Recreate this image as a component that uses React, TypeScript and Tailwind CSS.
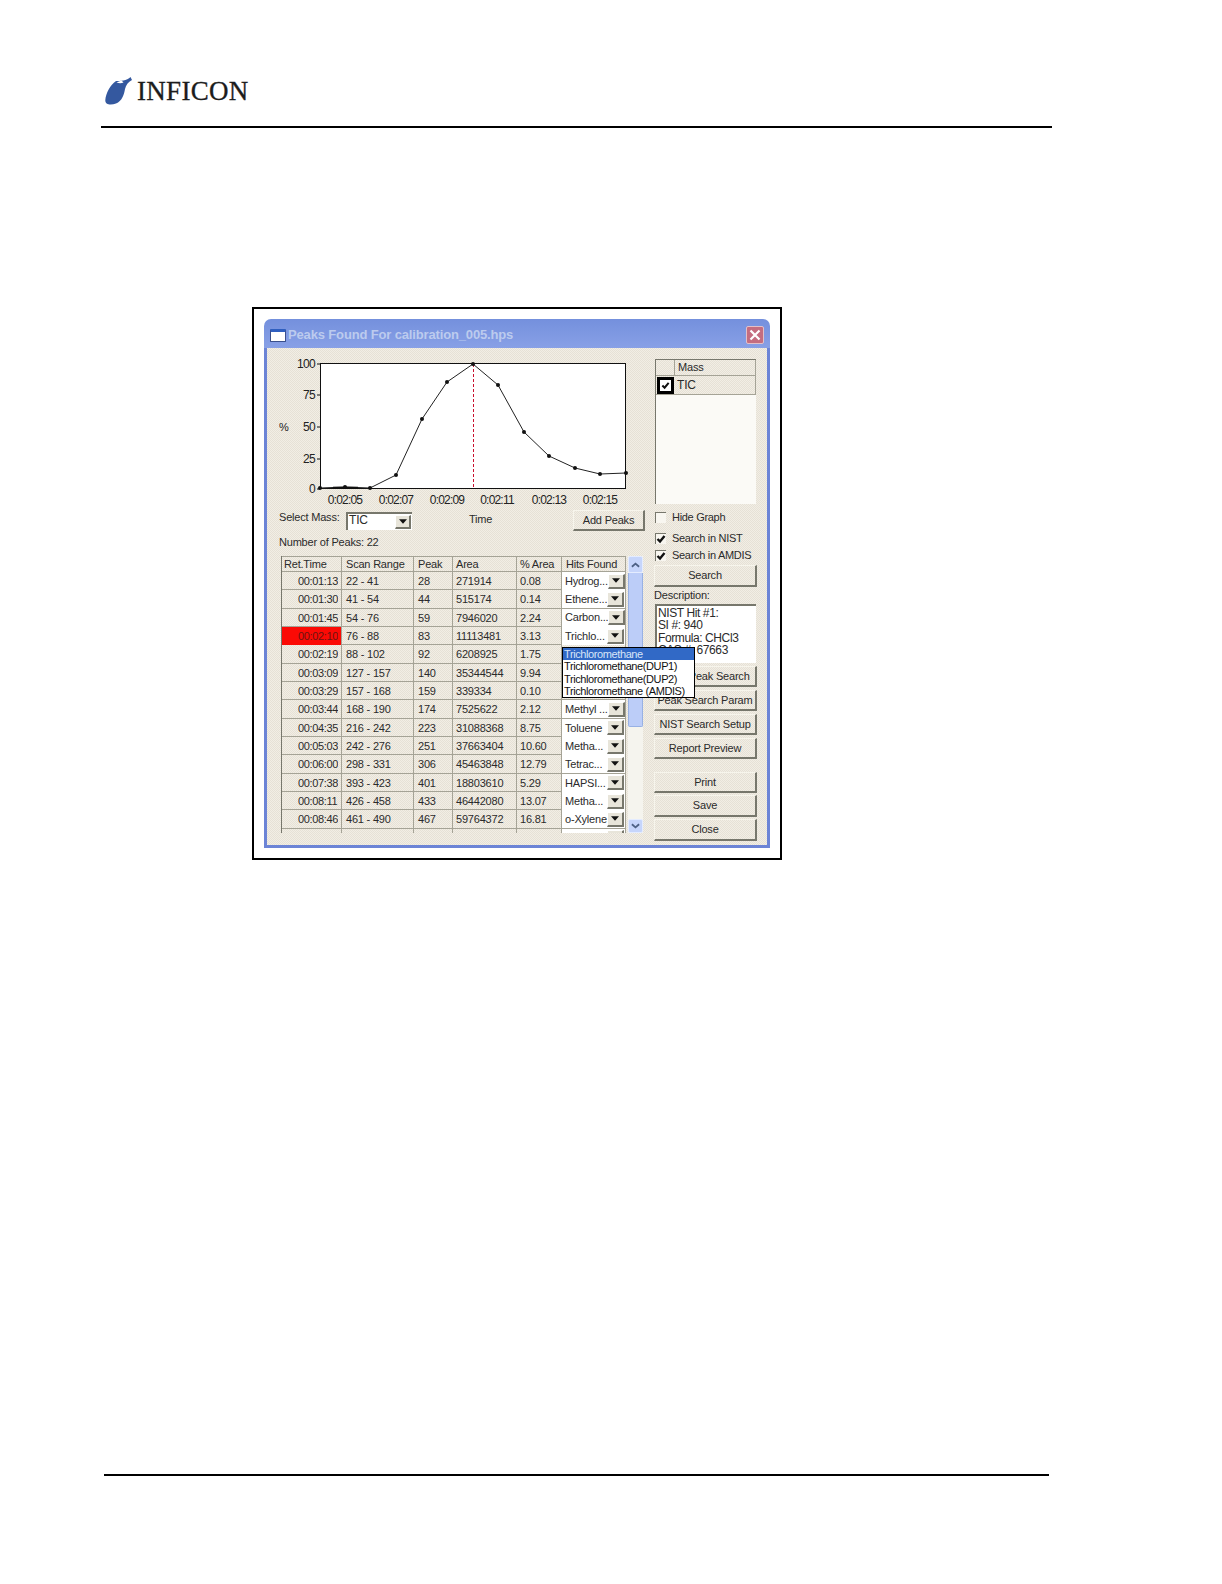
import React from 'react'

const texture =
  'bg-[repeating-conic-gradient(#e6e1d6_0_25%,#f2eee5_0_50%)] bg-[length:2px_2px]'

const rows = [
  ['00:01:13', '22 - 41', '28', '271914', '0.08', 'Hydrog...'],
  ['00:01:30', '41 - 54', '44', '515174', '0.14', 'Ethene...'],
  ['00:01:45', '54 - 76', '59', '7946020', '2.24', 'Carbon...'],
  ['00:02:10', '76 - 88', '83', '11113481', '3.13', 'Trichlo...'],
  ['00:02:19', '88 - 102', '92', '6208925', '1.75', ''],
  ['00:03:09', '127 - 157', '140', '35344544', '9.94', ''],
  ['00:03:29', '157 - 168', '159', '339334', '0.10', ''],
  ['00:03:44', '168 - 190', '174', '7525622', '2.12', 'Methyl ...'],
  ['00:04:35', '216 - 242', '223', '31088368', '8.75', 'Toluene'],
  ['00:05:03', '242 - 276', '251', '37663404', '10.60', 'Metha...'],
  ['00:06:00', '298 - 331', '306', '45463848', '12.79', 'Tetrac...'],
  ['00:07:38', '393 - 423', '401', '18803610', '5.29', 'HAPSI...'],
  ['00:08:11', '426 - 458', '433', '46442080', '13.07', 'Metha...'],
  ['00:08:46', '461 - 490', '467', '59764372', '16.81', 'o-Xylene'],
  ['00:09:14', '491 - 505', '494', '8377144', '2.44', 'o-Xyle...'],
]

const points = [
  [320, 488], [345, 487], [370, 488], [396, 475], [422, 419], [447, 382], [473, 364],
  [498, 385], [524, 432], [549, 456], [575, 468], [600, 474], [626, 473],
]

const yTicks = [
  ['100', 364], ['75', 395], ['50', 427], ['25', 459], ['0', 489],
] as const

const xTicks = [
  ['0:02:05', 345], ['0:02:07', 396], ['0:02:09', 447], ['0:02:11', 497], ['0:02:13', 549], ['0:02:15', 600],
] as const

function Logo() {
  return (
    <div className="flex items-center h-[30px]">
      <svg viewBox="0 0 28 30" className="w-[28px] h-[30px]">
        <path
          d="M0.3 24C1 17 5 9 11 5C15 5 22 5 25.5 1L27 4C23 6 21 9 20 13C19 19 17 25 11 27.5C6 29.5 0 29 0.3 24Z"
          fill="#34589f"
        />
        <path d="M11.5 6.5C14 7.5 16.5 7.5 18.5 6.5L16.5 4.5Z" fill="#fff" />
      </svg>
      <span className="ml-[4px] mt-[1px] font-['Liberation_Serif',serif] text-[27px] tracking-[0.3px] leading-none text-[#1c1c1c] [-webkit-text-stroke:0.3px_#1c1c1c]">
        INFICON
      </span>
    </div>
  )
}

function Chart() {
  return (
    <svg viewBox="279 355 366 153" className="block w-[366px] h-[153px]">
      <rect x="320.5" y="363.5" width="305" height="125" fill="#fff" stroke="#111" />
      {yTicks.map(([label, y]) => (
        <g key={label}>
          <line x1="317" x2="320" y1={y} y2={y} stroke="#111" />
          <text x="315" y={y + 4} textAnchor="end" className="text-[12px] tracking-[-0.7px]" fill="#222">
            {label}
          </text>
        </g>
      ))}
      <text x="279" y="431" className="text-[11px]" fill="#222">%</text>
      {xTicks.map(([label, x]) => (
        <text key={label} x={x} y="504" textAnchor="middle" className="text-[12px] tracking-[-0.8px]" fill="#222">
          {label}
        </text>
      ))}
      <line x1="473.5" x2="473.5" y1="364" y2="488" stroke="#c8102e" strokeDasharray="3 2" />
      <polyline points={points.map((p) => p.join(',')).join(' ')} fill="none" stroke="#222" />
      <line x1="333" x2="358" y1="487.5" y2="487.5" stroke="#111" strokeWidth="1.5" />
      {points.map(([x, y]) => (
        <circle key={x} cx={x} cy={y} r="2" fill="#111" />
      ))}
    </svg>
  )
}

function DropArrow() {
  return (
    <svg viewBox="0 0 9 5" className="w-[8px] h-[5px]">
      <path d="M0 0h9L4.5 5z" fill="#111" />
    </svg>
  )
}

function ArrowButton({ className }: { className: string }) {
  return (
    <span
      className={`flex items-center justify-center bg-[#e8e5da] border-t border-l border-t-white border-l-white border-r-2 border-b-2 border-r-[#77776c] border-b-[#77776c] ${className}`}
    >
      <DropArrow />
    </span>
  )
}

function Check({ checked, label }: { checked: boolean; label: string }) {
  return (
    <div className="flex items-center h-[11px] ml-[1px]">
      <span className="flex items-center justify-center w-[11px] h-[11px] bg-[#f8f6f0] border-t border-l border-[#77776c]">
        {checked && (
          <svg viewBox="0 0 10 10" className="w-[10px] h-[10px]">
            <path d="M1.5 5L4 7.5L8.5 2" stroke="#111" strokeWidth="2.4" fill="none" />
          </svg>
        )}
      </span>
      <span className="ml-[6px] whitespace-nowrap tracking-[-0.3px]">{label}</span>
    </div>
  )
}

function Btn({ label, className }: { label: string; className: string }) {
  return (
    <button
      type="button"
      className={`block border-t border-l border-t-[#f7f5ec] border-l-[#f7f5ec] border-r-2 border-b-2 border-r-[#77776c] border-b-[#77776c] whitespace-nowrap ${className}`}
    >
      {label}
    </button>
  )
}

function PeakTable() {
  return (
    <div className="w-[345px] h-[277px] overflow-hidden border-l border-[#77776c]">
      <div className="grid grid-cols-[60px_72px_39px_64px_45px_64px] h-[16px] items-center border-b border-t border-[#a5a396] leading-[14px]">
        <div className="pl-[2px] h-full border-r border-[#a5a396]">Ret.Time</div>
        <div className="pl-[4px] h-full border-r border-[#a5a396]">Scan Range</div>
        <div className="pl-[4px] h-full border-r border-[#a5a396]">Peak</div>
        <div className="pl-[3px] h-full border-r border-[#a5a396]">Area</div>
        <div className="pl-[3px] h-full border-r border-[#a5a396]">% Area</div>
        <div className="pl-[4px] h-full border-r border-[#a5a396]">Hits Found</div>
      </div>
      {rows.map((r, i) => (
        <div
          key={r[0]}
          className="grid grid-cols-[60px_72px_39px_64px_45px_64px] h-[18.35px] items-center border-b border-[#a5a396]"
        >
          <div className={`h-full leading-[18px] pr-[3px] border-r border-[#a5a396] tracking-[-0.35px] ${i === 3 ? 'bg-[#fb0a05] text-[#6d1410]' : ''}`}>
            <div className="ml-[16px] overflow-hidden whitespace-nowrap">{r[0]}</div>
          </div>
          <div className="h-full pl-[4px] leading-[18px] border-r border-[#a5a396]">{r[1]}</div>
          <div className="h-full pl-[4px] leading-[18px] border-r border-[#a5a396]">{r[2]}</div>
          <div className="h-full pl-[3px] leading-[18px] border-r border-[#a5a396]">{r[3]}</div>
          <div className="h-full pl-[3px] leading-[18px] border-r border-[#a5a396]">{r[4]}</div>
          <div className="h-full flex items-center border-r border-[#a5a396]">
            {r[5] && (
              <div className="flex items-center justify-between w-full h-full pl-[3px] pr-[1px] bg-white whitespace-nowrap">
                {r[5]}
                <ArrowButton className="w-[17px] h-[15px] shrink-0" />
              </div>
            )}
          </div>
        </div>
      ))}
    </div>
  )
}

function Chevron({ up }: { up?: boolean }) {
  return (
    <svg viewBox="0 0 10 6" className="w-[9px] h-[6px]">
      <path d={up ? 'M1 5L5 1.5L9 5' : 'M1 1L5 4.5L9 1'} stroke="#4d6185" strokeWidth="2" fill="none" />
    </svg>
  )
}

function ScrollBar() {
  return (
    <div className="flex flex-col w-[15px] h-[277px] bg-[#f5f4ee]">
      <div className="flex items-center justify-center h-[17px] bg-[#c6d5fb] border border-[#e4ecff] rounded-[2px]">
        <Chevron up />
      </div>
      <div className="h-[154px] bg-[#bccdf8] border-b border-x border-[#98b1e4] rounded-b-[2px]" />
      <div className="flex-1" />
      <div className="flex items-center justify-center h-[14px] bg-[#c6d5fb] border border-[#e4ecff] rounded-[2px]">
        <Chevron />
      </div>
    </div>
  )
}

function HitsMenu() {
  const items = ['Trichloromethane', 'Trichloromethane(DUP1)', 'Trichloromethane(DUP2)', 'Trichloromethane (AMDIS)']
  return (
    <div className="absolute left-[295px] top-[299px] w-[133px] h-[51px] bg-white border border-black tracking-[-0.4px] leading-[12.25px]">
      {items.map((item, i) => (
        <div key={item} className={`pl-[1px] h-[12.25px] whitespace-nowrap ${i === 0 ? 'bg-[#3169c6] text-[#d8e4f8]' : 'text-[#111]'}`}>
          {item}
        </div>
      ))}
    </div>
  )
}

function RightPanel() {
  return (
    <div className="w-[103px] ml-[9px] mt-[4px] flex flex-col">
      <div className="ml-[1px] w-[101px] h-[145px] bg-[#fbfaf6] border-l border-t border-[#77776c]">
        <div className={`flex h-[16px] leading-[15px] border-b border-[#a5a396] ${texture}`}>
          <div className="w-[19px] border-r border-[#a5a396]" />
          <div className="flex-1 pl-[3px] border-r border-[#a5a396]">Mass</div>
        </div>
        <div className={`flex items-center h-[19px] border-b border-r border-[#a5a396] text-[12px] ${texture}`}>
          <span className="flex items-center justify-center w-[17px] h-[17px] ml-[1px] bg-white border-[3px] border-black">
            <svg viewBox="0 0 10 10" className="w-[9px] h-[9px]">
              <path d="M1.5 5L4 7.5L8.5 2" stroke="#111" strokeWidth="2.2" fill="none" />
            </svg>
          </span>
          <span className="ml-[3px]">TIC</span>
        </div>
      </div>
      <div className="mt-[8px]"><Check checked={false} label="Hide Graph" /></div>
      <div className="mt-[10px]"><Check checked label="Search in NIST" /></div>
      <div className="mt-[6px]"><Check checked label="Search in AMDIS" /></div>
      <Btn label="Search" className="w-[103px] h-[22px] mt-[4px]" />
      <div className="mt-[2px] h-[12px] leading-[12px]">Description:</div>
      <div className="mt-[3px] ml-[1px] w-[101px] h-[59px] pl-[1px] pt-[1px] bg-white border-t-2 border-l-2 border-[#77776c] text-[12px] leading-[12.4px] tracking-[-0.4px] whitespace-nowrap">
        <div>NIST Hit #1:</div>
        <div>SI #: 940</div>
        <div>Formula: CHCl3</div>
        <div>CAS #: 67663</div>
      </div>
      <Btn label="Redo Peak Search" className="w-[103px] h-[21px] mt-[3px]" />
      <Btn label="Peak Search Param" className="w-[103px] h-[21px] mt-[3px]" />
      <Btn label="NIST Search Setup" className="w-[103px] h-[21px] mt-[3px]" />
      <Btn label="Report Preview" className="w-[103px] h-[21px] mt-[3px]" />
      <Btn label="Print" className="w-[103px] h-[21px] mt-[13px]" />
      <Btn label="Save" className="w-[103px] h-[22px] mt-[2px]" />
      <Btn label="Close" className="w-[103px] h-[22px] mt-[2px]" />
    </div>
  )
}

function PeaksWindow() {
  return (
    <div className="flex flex-col w-[506px] h-[529px] rounded-t-[7px] overflow-hidden">
      <div className="flex items-center h-[29px] pt-[3px] pl-[6px] pr-[6px] bg-gradient-to-b from-[#7490dd] to-[#88a0e6]">
        <span className="w-[16px] h-[13px] bg-white border border-[#3a4f8c] border-t-[3px] border-t-[#2f5fc0] rounded-[1px]" />
        <span className="ml-[2px] flex-1 font-bold text-[13px] tracking-[-0.15px] text-[#bccbee] whitespace-nowrap">
          Peaks Found For calibration_005.hps
        </span>
        <span className="flex items-center justify-center w-[18px] h-[18px] bg-[#c46d80] border border-[#e2c0c8] rounded-[2px]">
          <svg viewBox="0 0 12 12" className="w-[12px] h-[12px]">
            <path d="M1.5 1.5L10.5 10.5M10.5 1.5L1.5 10.5" stroke="#fff" strokeWidth="2.2" />
          </svg>
        </span>
      </div>
      <div className={`relative flex flex-1 pl-[12px] pt-[7px] border-[3px] border-t-0 border-[#6c84d6] text-[11px] tracking-[-0.2px] text-[#2b2b2b] ${texture}`}>
        <div className="w-[366px] flex flex-col">
          <Chart />
          <div className="flex items-center h-[21px] mt-[2px]">
            <span className="w-[67px] -mt-[6px] whitespace-nowrap">Select Mass:</span>
            <div className="flex items-center justify-between w-[66px] h-[18px] pl-[1px] pr-[1px] bg-white border-t-2 border-l-2 border-[#77776c] text-[12px]">
              <span className="-mt-[3px]">TIC</span>
              <ArrowButton className="w-[16px] h-[14px]" />
            </div>
            <span className="ml-[57px] -mt-[2px]">Time</span>
            <Btn label="Add Peaks" className="w-[72px] h-[21px] ml-auto" />
          </div>
          <div className="mt-[5px] h-[12px] leading-[12px]">Number of Peaks: 22</div>
          <div className="flex gap-[2px] ml-[2px] mt-[8px]">
            <PeakTable />
            <ScrollBar />
          </div>
        </div>
        <RightPanel />
        <HitsMenu />
      </div>
    </div>
  )
}

export default function App() {
  return (
    <div className="w-[1222px] h-[1584px] bg-white font-['Liberation_Sans',Arial,sans-serif] overflow-hidden">
      <div className="pt-[76px] pl-[105px]">
        <Logo />
      </div>
      <div className="mt-[20px] ml-[101px] w-[951px] h-[2px] bg-black" />
      <div className="mt-[179px] ml-[252px] w-[530px] h-[553px] pl-[10px] pt-[10px] border-2 border-black">
        <PeaksWindow />
      </div>
      <div className="mt-[614px] ml-[104px] w-[945px] h-[2px] bg-black" />
    </div>
  )
}
